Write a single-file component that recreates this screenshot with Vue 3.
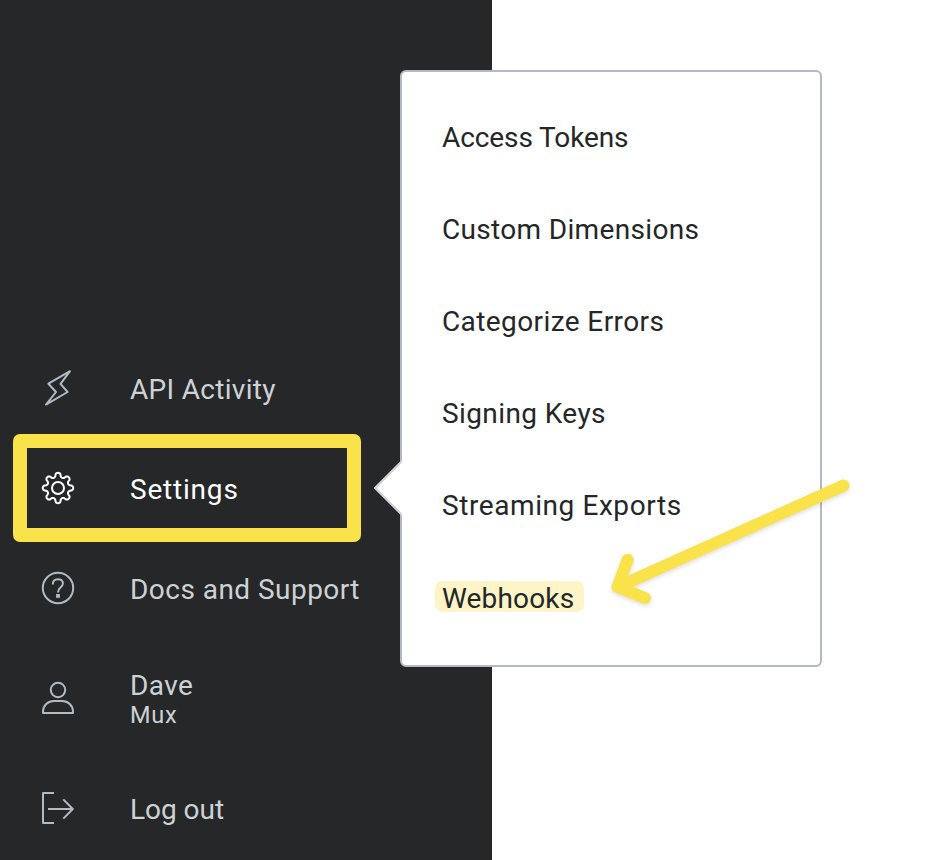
<script setup>
const sidebar = [
  { id: 'activity', label: 'API Activity' },
  { id: 'settings', label: 'Settings', active: true },
  { id: 'docs', label: 'Docs and Support' },
  { id: 'user', label: 'Dave', sub: 'Mux' },
  { id: 'logout', label: 'Log out' },
]
const menu = [
  { id: 'tokens', label: 'Access Tokens' },
  { id: 'dimensions', label: 'Custom Dimensions' },
  { id: 'errors', label: 'Categorize Errors' },
  { id: 'keys', label: 'Signing Keys' },
  { id: 'exports', label: 'Streaming Exports' },
  { id: 'webhooks', label: 'Webhooks' },
]

// Eight-toothed gear outline centred in a 36px box; the skewed angle steepens the tooth flanks.
const gear = Array.from({ length: 192 }, (_, i) => {
  const t = (i / 192) * Math.PI * 2
  const r = 13.1 + 2.1 * Math.cos(8 * t)
  const a = t + 0.035 * Math.sin(16 * t)
  return `${(18 + r * Math.sin(a)).toFixed(2)} ${(18 - r * Math.cos(a)).toFixed(2)}`
}).join('L')
</script>

<template>
  <div class="page">
    <nav class="sidebar">
      <a v-for="item in sidebar" :key="item.id" class="row" :class="[item.id, { active: item.active }]">
        <svg class="icon" viewBox="0 0 36 36">
          <path v-if="item.id === 'activity'" d="M30 1.2L8.4 13.7L16 22L6 34.6L27.6 22L20.5 13.8Z" />
          <template v-else-if="item.id === 'settings'">
            <path :d="'M' + gear + 'Z'" />
            <circle cx="18" cy="18" r="6" />
          </template>
          <template v-else-if="item.id === 'docs'">
            <circle cx="18" cy="18" r="15.2" />
            <path d="M12.8 14.4C12.8 11.2 14.7 9.3 17.8 9.3C20.9 9.3 22.9 11.1 22.9 13.6C22.9 17.4 18 17.4 18 22.4" />
            <rect class="dot" x="16.1" y="24" width="3.8" height="3.8" />
          </template>
          <template v-else-if="item.id === 'user'">
            <circle cx="18" cy="10" r="7.2" />
            <path d="M3 33V31.5C3 25.5 8 21 14 21H22C28 21 33 25.5 33 31.5V33Z" />
          </template>
          <template v-else>
            <path d="M14 3H3V33H14" />
            <path d="M8 19H32M23.3 9.4L32.8 19L23.3 28.6" />
          </template>
        </svg>
        <span class="text">
          <span class="label">{{ item.label }}</span>
          <span v-if="item.sub" class="sub">{{ item.sub }}</span>
        </span>
      </a>
    </nav>

    <div class="popover">
      <svg class="pointer" viewBox="0 0 30 56">
        <path class="fill" d="M30 0L2 28L30 56Z" />
        <path class="edge" d="M28 1L1 28L28 55" />
      </svg>
      <a v-for="item in menu" :key="item.id" class="entry" :class="item.id">
        <span class="name">{{ item.label }}</span>
      </a>
    </div>

    <div class="frame"></div>
    <svg class="arrow" viewBox="0 0 260 140">
      <path d="M243.5 15.5L17.5 117M27.7 89.7L17.5 117L45 128" />
    </svg>
  </div>
</template>

<style>
body {
  margin: 0;
  background: #fff;
}
</style>

<style scoped>
.page {
  position: relative;
  width: 936px;
  height: 860px;
  overflow: hidden;
  background: #fff;
  font-family: Roboto, "Liberation Sans", sans-serif;
  font-size: 28px;
  line-height: 32px;
  letter-spacing: 0.4px;
}
.sidebar {
  box-sizing: border-box;
  width: 492px;
  height: 860px;
  padding: 0 0 2px 40px;
  display: flex;
  flex-direction: column;
  justify-content: flex-end;
  background: #252729;
  color: #ced2d5;
}
.row {
  height: 100px;
  display: flex;
  align-items: center;
  gap: 54px;
}
.row.user {
  height: 120px;
}
.icon {
  width: 36px;
  height: 36px;
  flex: none;
  fill: none;
  stroke: #b2bac2;
  stroke-width: 2;
  stroke-linejoin: round;
}
.dot {
  fill: #b2bac2;
  stroke: none;
}
.active {
  color: #fff;
}
.active .icon {
  stroke: #fff;
}
.text {
  display: flex;
  flex-direction: column;
  padding-top: 4px;
  white-space: nowrap;
}
.user .text {
  padding-top: 2px;
}
.sub {
  font-size: 23.5px;
  line-height: 26px;
  letter-spacing: 0.8px;
}
.activity .label {
  letter-spacing: 0.3px;
}
.settings .label {
  letter-spacing: 0.8px;
}
.docs .label {
  letter-spacing: 0.46px;
}
.logout .label {
  letter-spacing: -0.03px;
}
.popover {
  position: absolute;
  left: 400px;
  top: 70px;
  box-sizing: border-box;
  width: 422px;
  height: 597px;
  padding: 20px 40px 0;
  border: 2px solid #b2b9c3;
  border-radius: 6px;
  background: #fff;
  color: #242628;
}
.pointer {
  position: absolute;
  left: -28px;
  top: 388px;
  width: 30px;
  height: 56px;
}
.fill {
  fill: #fff;
}
.edge {
  fill: none;
  stroke: #d2d5da;
  stroke-width: 2;
}
.entry {
  height: 92px;
  display: flex;
  align-items: center;
}
.name {
  position: relative;
  z-index: 0;
  white-space: nowrap;
}
.tokens .name {
  letter-spacing: -0.1px;
}
.dimensions .name {
  letter-spacing: 0.33px;
}
.exports .name {
  letter-spacing: 0.58px;
}
.webhooks .name {
  top: 1px;
  letter-spacing: 0.17px;
}
.webhooks .name::before {
  content: "";
  position: absolute;
  z-index: -1;
  left: -7.5px;
  top: -2px;
  width: 149px;
  height: 31px;
  border-radius: 7px;
  background: #fdf5c8;
}
.frame {
  position: absolute;
  left: 13px;
  top: 434px;
  box-sizing: border-box;
  width: 347.5px;
  height: 108px;
  border: 14px solid #fae24b;
  border-radius: 7px;
}
.arrow {
  position: absolute;
  left: 600px;
  top: 470px;
  width: 260px;
  height: 140px;
  overflow: visible;
  fill: none;
  stroke: #fae24b;
  stroke-width: 12;
  stroke-linecap: round;
  stroke-linejoin: round;
  filter: drop-shadow(0 2px 2px rgba(0, 0, 0, 0.13));
}
</style>
